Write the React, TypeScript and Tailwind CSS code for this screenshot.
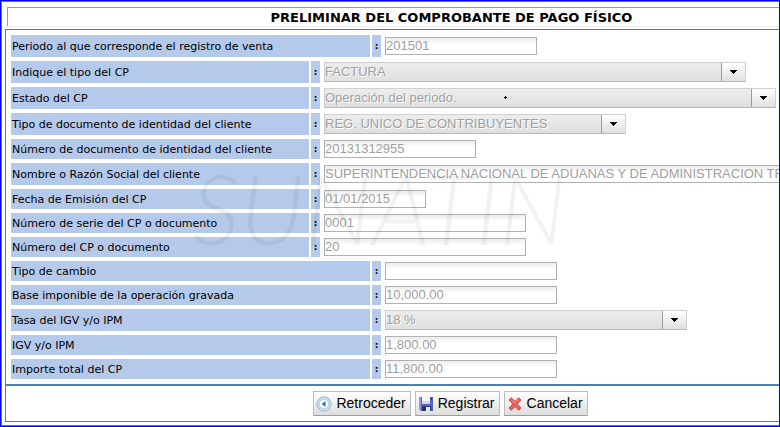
import React from 'react';
import clsx from 'clsx';

type Field = {
  id: string;
  label: string;
  value: string;
  type: 'input' | 'select';
  width: string;
  tall?: boolean;
};

const clientFields: Field[] = [
  { id: 'tipoCp', label: 'Indique el tipo del CP', value: 'FACTURA', type: 'select', width: 'w-[422px]', tall: true },
  { id: 'estadoCp', label: 'Estado del CP', value: 'Operación del periodo.', type: 'select', width: 'w-[452px]', tall: true },
  { id: 'tipoDoc', label: 'Tipo de documento de identidad del cliente', value: 'REG. UNICO DE CONTRIBUYENTES', type: 'select', width: 'w-[302px]', tall: true },
  { id: 'numDoc', label: 'Número de documento de identidad del cliente', value: '20131312955', type: 'input', width: 'w-[152px]' },
  { id: 'razonSocial', label: 'Nombre o Razón Social del cliente', value: 'SUPERINTENDENCIA NACIONAL DE ADUANAS Y DE ADMINISTRACION TRIBUTARIA', type: 'input', width: 'w-[552px]', tall: true },
  { id: 'fecha', label: 'Fecha de Emisión del CP', value: '01/01/2015', type: 'input', width: 'w-[102px]' },
  { id: 'serie', label: 'Número de serie del CP o documento', value: '0001', type: 'input', width: 'w-[202px]' },
  { id: 'numero', label: 'Número del CP o documento', value: '20', type: 'input', width: 'w-[202px]' },
];

const amountFields: Field[] = [
  { id: 'tipoCambio', label: 'Tipo de cambio', value: '', type: 'input', width: 'w-[172px]' },
  { id: 'base', label: 'Base imponible de la operación gravada', value: '10,000.00', type: 'input', width: 'w-[172px]' },
  { id: 'tasa', label: 'Tasa del IGV y/o IPM', value: '18 %', type: 'select', width: 'w-[302px]', tall: true },
  { id: 'igv', label: 'IGV y/o IPM', value: '1,800.00', type: 'input', width: 'w-[172px]' },
  { id: 'total', label: 'Importe total del CP', value: '11,800.00', type: 'input', width: 'w-[172px]' },
];

const SelectBox = ({ field }: { field: Field }) => (
  <div className={clsx('flex h-5 shrink-0 border border-[#d0d0d0] border-b-[#b8b8b8] bg-linear-to-b from-[#ededed] to-[#dfdfdf]', field.width)}>
    <select
      id={field.id}
      disabled
      className="min-w-0 flex-1 appearance-none text-[13px] leading-[14px] text-[#a0a0a0] opacity-100 text-shadow-[1px_1px_0_#fff]"
    >
      <option>{field.value}</option>
    </select>
    <span className="flex w-6 items-center justify-center border-l border-[#9a9a9a] bg-linear-to-b from-white to-[#e0e0e0]">
      <svg width="7" height="4" viewBox="0 0 7 4" shapeRendering="crispEdges">
        <path d="M0 0h7v1H0zM1 1h5v1H1zM2 2h3v1H2zM3 3h1v1H3z" fill="#000" />
      </svg>
    </span>
  </div>
);

const Row = ({ field, wide }: { field: Field; wide?: boolean }) => (
  <div className={clsx('flex items-center', field.tall ? 'h-[22px]' : 'h-5')}>
    <label
      htmlFor={field.id}
      className={clsx('flex h-full shrink-0 items-center bg-[#b5c9ea] pt-0.5 pl-px text-[11px]', wide ? 'w-[359px]' : 'w-[298px]')}
    >
      {field.label}
    </label>
    <span className="ml-0.5 flex h-full w-[9px] shrink-0 items-center justify-center bg-[#b5c9ea] pt-0.5 text-[9px] font-bold">:</span>
    <div className="ml-1">
      {field.type === 'select' ? (
        <SelectBox field={field} />
      ) : (
        <input
          id={field.id}
          type="text"
          disabled
          defaultValue={field.value}
          className={clsx('block h-[18px] border border-[#b1b1b1] bg-linear-to-b from-[#ececec] to-white to-40% text-[13px] text-[#a0a0a0]', field.width)}
        />
      )}
    </div>
  </div>
);

const BackIcon = () => (
  <svg width="16" height="16" viewBox="0 0 16 16">
    <circle cx="8" cy="8" r="7" fill="#dfeaf6" stroke="#a9c4e0" strokeWidth="1.4" />
    <circle cx="8" cy="8" r="5" fill="#fafdff" stroke="#8fb4d8" strokeWidth="0.8" />
    <path d="M9.5 5v6L5.8 8z" fill="#2372b9" />
  </svg>
);

const SaveIcon = () => (
  <svg width="16" height="16" viewBox="0 0 16 16">
    <path d="M1 1h14v14H3l-2-2z" fill="#5763c4" />
    <path d="M1 1h2v13l-2-1z" fill="#8d97e2" />
    <path d="M4 1h8v7H4z" fill="#f5f8fd" />
    <path d="M4 5h8v3H4z" fill="#cbd8ee" />
    <path d="M13 2h1v2h-1z" fill="#28308a" />
    <path d="M4 10h9v5H4z" fill="#303879" />
    <path d="M8 11h4v4H8z" fill="#e4e9f5" />
    <path d="M5 11h2v3H5z" fill="#20265e" />
  </svg>
);

const CancelIcon = () => (
  <svg width="16" height="16" viewBox="0 0 16 16">
    <path
      d="M2 4l2.3-2.3L8 5.4l3.7-3.7L14 4l-3.7 4 3.7 4-2.3 2.3L8 10.6l-3.7 3.7L2 12l3.7-4z"
      fill="#e0605a"
      stroke="#cb4642"
      strokeWidth="0.9"
      strokeLinejoin="round"
    />
    <path d="M3.8 3.6l4 3.6 4.2-4" fill="none" stroke="#ee918a" strokeWidth="0.9" />
  </svg>
);

const ActionButton = ({ icon, children }: { icon: React.ReactNode; children: React.ReactNode }) => (
  <button
    type="button"
    className="flex h-[25px] items-center gap-1 border border-[#bdbdbd] border-b-[#9c9c9c] bg-linear-to-b from-white to-[#dedede] pr-1 pl-0.5 text-[14px] text-black"
  >
    {icon}
    <span>{children}</span>
  </button>
);

const App = () => {
  return (
    <main className="overflow-hidden border border-[#0000ff] bg-white font-['DejaVu_Sans',sans-serif] text-black">
      <div className="relative min-w-[896px] border border-[#4682b4] pt-[5px] pb-[3px] pl-[3px]">
        {/* Title */}
        <h1 className="ml-0.5 flex h-5 items-center justify-center border border-[#9a9a9a] border-b-[#ededed] pt-px text-[13px] font-bold">
          PRELIMINAR DEL COMPROBANTE DE PAGO FÍSICO
        </h1>

        {/* Form */}
        <form className="mt-0.5 border border-[#4682b4]">
          <div className="flex flex-col gap-1 p-[5px] [&_input]:font-['Liberation_Sans',Arial,sans-serif] [&_select]:font-['Liberation_Sans',Arial,sans-serif]">
            <Row
              wide
              field={{ id: 'periodo', label: 'Periodo al que corresponde el registro de venta', value: '201501', type: 'input', width: 'w-[152px]', tall: true }}
            />
            {clientFields.map((field) => (
              <Row key={field.id} field={field} />
            ))}
            {amountFields.map((field) => (
              <Row key={field.id} field={field} wide />
            ))}
          </div>

          {/* Actions */}
          <div className="flex justify-center gap-1 border-t-2 border-[#4682b4] py-[5px] font-['Liberation_Sans',Arial,sans-serif]">
            <ActionButton icon={<BackIcon />}>Retroceder</ActionButton>
            <ActionButton icon={<SaveIcon />}>Registrar</ActionButton>
            <ActionButton icon={<CancelIcon />}>Cancelar</ActionButton>
          </div>
        </form>

        {/* Watermark */}
        <div
          aria-hidden="true"
          className="pointer-events-none absolute top-[162px] left-[190px] font-['Lato',cursive] text-[96px] leading-[88px] font-light text-black/5 italic"
        >
          SUNATIN
        </div>
        <svg className="pointer-events-none absolute top-[94px] left-[502px]" width="3" height="3" viewBox="0 0 3 3" shapeRendering="crispEdges">
          <path d="M1 0h1v3H1zM0 1h3v1H0z" fill="#000" />
        </svg>
      </div>
    </main>
  );
};

export default App;
